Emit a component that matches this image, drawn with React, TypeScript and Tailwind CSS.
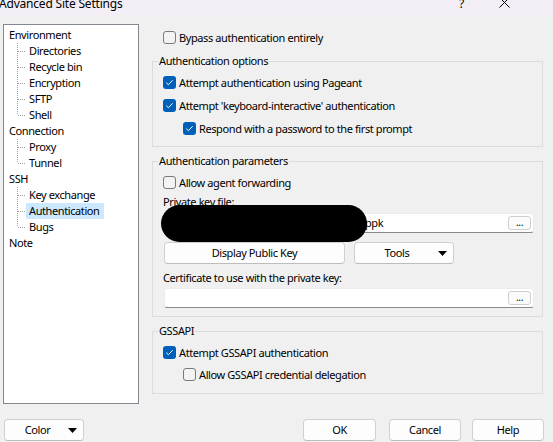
import React from "react";

const tree: { label: string; children: string[] }[] = [
  { label: "Environment", children: ["Directories", "Recycle bin", "Encryption", "SFTP", "Shell"] },
  { label: "Connection", children: ["Proxy", "Tunnel"] },
  { label: "SSH", children: ["Key exchange", "Authentication", "Bugs"] },
  { label: "Note", children: [] },
];

function Check({ checked }: { checked: boolean }) {
  if (checked) {
    return (
      <span className="w-[13px] h-[13px] rounded-[3px] bg-[#005fb8] flex items-center justify-center shrink-0">
        <svg width="13" height="13" viewBox="0 0 13 13">
          <path d="M3.3 6.7 L5.4 8.7 L9.6 4.3" stroke="white" strokeWidth="1" fill="none" />
        </svg>
      </span>
    );
  }
  return <span className="w-[13px] h-[13px] rounded-[3px] border border-[#7a7a7a] bg-[#f3f3f3] shrink-0" />;
}

function CheckRow({ checked, label, className = "" }: { checked: boolean; label: string; className?: string }) {
  return (
    <div className={`h-[13px] flex items-center gap-[3px] ${className}`}>
      <Check checked={checked} />
      <span className="leading-[14px] whitespace-nowrap">{label}</span>
    </div>
  );
}

function Group({ title, className = "", children }: { title: string; className?: string; children: React.ReactNode }) {
  return (
    <div className={`relative border border-[#dcdcdc] ${className}`}>
      <span className="absolute left-[5px] top-[-8px] bg-[#f0f0f0] px-[1px] leading-[14px] whitespace-nowrap">{title}</span>
      {children}
    </div>
  );
}

function Arrow() {
  return (
    <svg width="9" height="5" viewBox="0 0 9 5" className="shrink-0">
      <path d="M0 0 H9 L4.5 5 Z" fill="#000" />
    </svg>
  );
}

function Connector({ last }: { last: boolean }) {
  return (
    <svg width="9" height="16" viewBox="0 0 9 16" className="ml-[13px] shrink-0">
      <line x1="0.5" y1="0" x2="0.5" y2={last ? 8 : 16} stroke="#a0a0a0" strokeWidth="1" strokeDasharray="1 1" />
      <line x1="1" y1="8.5" x2="9" y2="8.5" stroke="#a0a0a0" strokeWidth="1" strokeDasharray="1 1" />
    </svg>
  );
}

function Btn({ children, className = "" }: { children: React.ReactNode; className?: string }) {
  return (
    <div
      className={`h-[22px] rounded-[4px] border border-[#d0d0d0] border-b-[#bdbdbd] bg-[#fdfdfd] flex items-center justify-center leading-[14px] ${className}`}
    >
      {children}
    </div>
  );
}

function FileInput({ text }: { text?: string }) {
  return (
    <div className="ml-[11px] w-[370px] h-[20px] bg-white rounded-[3px] border border-[#ececec] border-b-[#8a8a8a] flex items-center">
      <span className="flex-1 pl-[200px] leading-[14px] whitespace-nowrap">{text ?? ""}</span>
      <div className="mr-[2px] w-[23px] h-[14px] rounded-[3px] border border-[#cfcfcf] bg-[#fbfbfb] flex items-center justify-center text-[10px] leading-[10px] pb-[2px]">
        ...
      </div>
    </div>
  );
}

export default function App() {
  return (
    <div className="w-[553px] h-[442px] overflow-hidden bg-[#f0f0f0] text-black text-[11px] tracking-[-0.4px] font-['Noto_Sans',sans-serif] flex flex-col">
      {/* Title bar */}
      <div className="h-[15px] shrink-0 bg-[#f3eef6] flex items-start overflow-hidden relative">
        <span className="text-[12px] leading-[16px] -mt-[4px] -ml-[1px] whitespace-nowrap tracking-[-0.2px]">Advanced Site Settings</span>
        <span className="absolute left-[459px] -top-[4px] text-[12px] leading-[16px]">?</span>
        <svg width="11" height="11" viewBox="0 0 11 11" className="absolute left-[499px] -top-[3px]">
          <path d="M0.5 0.5 L10.5 10.5 M10.5 0.5 L0.5 10.5" stroke="#000" strokeWidth="1" />
        </svg>
      </div>

      {/* Body */}
      <div className="flex items-start pt-[9px]">
        {/* Tree */}
        <div className="ml-[3px] w-[136px] h-[380px] bg-white border border-[#828790] pt-[2px] shrink-0">
          {tree.map((n) => (
            <div key={n.label}>
              <div className="h-[16px] flex items-center pl-[5px] leading-[14px]">{n.label}</div>
              {n.children.map((c, i) => (
                <div key={c} className="h-[16px] flex items-stretch">
                  <Connector last={i === n.children.length - 1} />
                  <span
                    className={`flex items-center pl-[3px] pr-[4px] leading-[14px] ${c === "Authentication" ? "bg-[#cce8ff]" : ""}`}
                  >
                    {c}
                  </span>
                </div>
              ))}
            </div>
          ))}
        </div>

        {/* Right column */}
        <div className="ml-[13px] w-[391px] flex flex-col">
          <CheckRow checked={false} label="Bypass authentication entirely" className="mt-[7px] pl-[11px]" />

          <Group title="Authentication options" className="mt-[17px] pt-[14px] pb-[11px] pl-[10px] flex flex-col gap-[10px]">
            <CheckRow checked label="Attempt authentication using Pageant" />
            <CheckRow checked label="Attempt 'keyboard-interactive' authentication" />
            <CheckRow checked label="Respond with a password to the first prompt" className="pl-[20px]" />
          </Group>

          <Group title="Authentication parameters" className="mt-[14px] pt-[14px] pb-[8px] flex flex-col">
            <CheckRow checked={false} label="Allow agent forwarding" className="pl-[10px]" />
            <div className="mt-[6px] h-[14px] pl-[10px] leading-[14px]">Private key file:</div>
            <div className="mt-[4px]">
              <FileInput text="ppk" />
            </div>
            <div className="mt-[9px] ml-[11px] flex gap-[9px]">
              <Btn className="w-[181px]">Display Public Key</Btn>
              <Btn className="w-[100px]">
                <span className="flex-1 text-center pl-[1px]">Tools</span>
                <span className="mr-[6px]">
                  <Arrow />
                </span>
              </Btn>
            </div>
            <div className="mt-[7px] h-[14px] pl-[10px] leading-[14px]">Certificate to use with the private key:</div>
            <div className="mt-[3px]">
              <FileInput />
            </div>
            {/* redaction */}
            <div className="absolute left-[8px] top-[43px] w-[206px] h-[37px] rounded-full bg-black" />
          </Group>

          <Group title="GSSAPI" className="mt-[14px] pt-[14px] pb-[12px] pl-[10px] flex flex-col gap-[9px]">
            <CheckRow checked label="Attempt GSSAPI authentication" />
            <CheckRow checked={false} label="Allow GSSAPI credential delegation" className="pl-[20px]" />
          </Group>
        </div>
      </div>

      {/* Bottom buttons */}
      <div className="mt-[15px] flex items-center">
        <Btn className="ml-[4px] w-[80px]">
          <span className="flex-1 text-center pl-[2px]">Color</span>
          <span className="mr-[6px]">
            <Arrow />
          </span>
        </Btn>
        <Btn className="ml-[219px] w-[73px] border-[#0067c0] border-b-[#0067c0]">OK</Btn>
        <Btn className="ml-[13px] w-[72px]">Cancel</Btn>
        <Btn className="ml-[11px] w-[72px]">Help</Btn>
      </div>
    </div>
  );
}
